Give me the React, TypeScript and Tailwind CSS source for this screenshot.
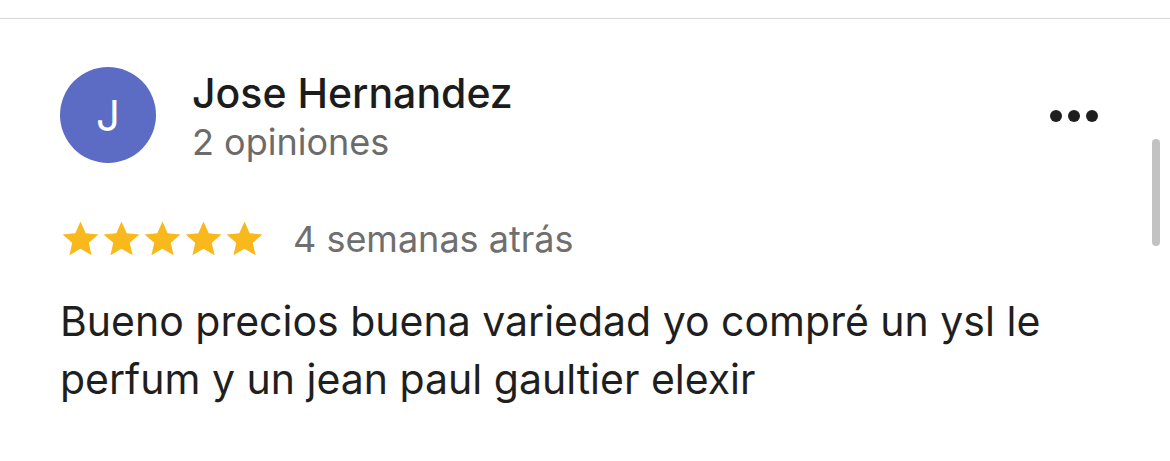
import React from "react";

const Star = () => (
  <svg viewBox="0 0 24 24" className="w-[43px] h-[43px] -mx-[1px]" fill="#F9B81B">
    <path d="M12 2.5l2.9 6.6 7.1.6-5.4 4.7 1.6 7-6.2-3.7-6.2 3.7 1.6-7L2 9.7l7.1-.6z" />
  </svg>
);

export default function App() {
  return (
    <div className="w-[1170px] h-[461px] bg-white overflow-hidden relative" style={{ fontFamily: "Inter, 'Noto Sans', sans-serif" }}>
      <div className="h-[19px] border-b border-[#d8d8d8]" />
      <div className="pl-[60px] pr-[72px] pt-[48px]">
        <div className="flex items-start">
          <div className="w-[96px] h-[96px] rounded-full bg-[#5c6bc4] flex items-center justify-center text-white text-[42px] font-normal shrink-0">
            J
          </div>
          <div className="ml-[36px] flex-1 pt-[2px]">
            <div className="text-[41px] leading-[48px] font-medium text-[#1c1c1c]">Jose Hernandez</div>
            <div className="text-[36px] leading-[50px] text-[#6b6b6b]">2 opiniones</div>
          </div>
          <div className="flex gap-[6px] mt-[43px]">
            <span className="w-[12px] h-[12px] rounded-full bg-[#1f1f1f]" />
            <span className="w-[12px] h-[12px] rounded-full bg-[#1f1f1f]" />
            <span className="w-[12px] h-[12px] rounded-full bg-[#1f1f1f]" />
          </div>
        </div>
        <div className="flex items-center mt-[50px]">
          <div className="flex">
            <Star /><Star /><Star /><Star /><Star />
          </div>
          <span className="ml-[28px] text-[36px] text-[#6f6f6f] leading-[40px]">4 semanas atrás</span>
        </div>
        <div className="mt-[32px] text-[41px] leading-[58px] text-[#1f1f1f] max-w-[1020px]">
          Bueno precios buena variedad yo compré un ysl le perfum y un jean paul gaultier elexir
        </div>
      </div>
      <div className="absolute left-[1152px] top-[139px] w-[8px] h-[107px] rounded-full bg-[#c2c2c2]" />
    </div>
  );
}
